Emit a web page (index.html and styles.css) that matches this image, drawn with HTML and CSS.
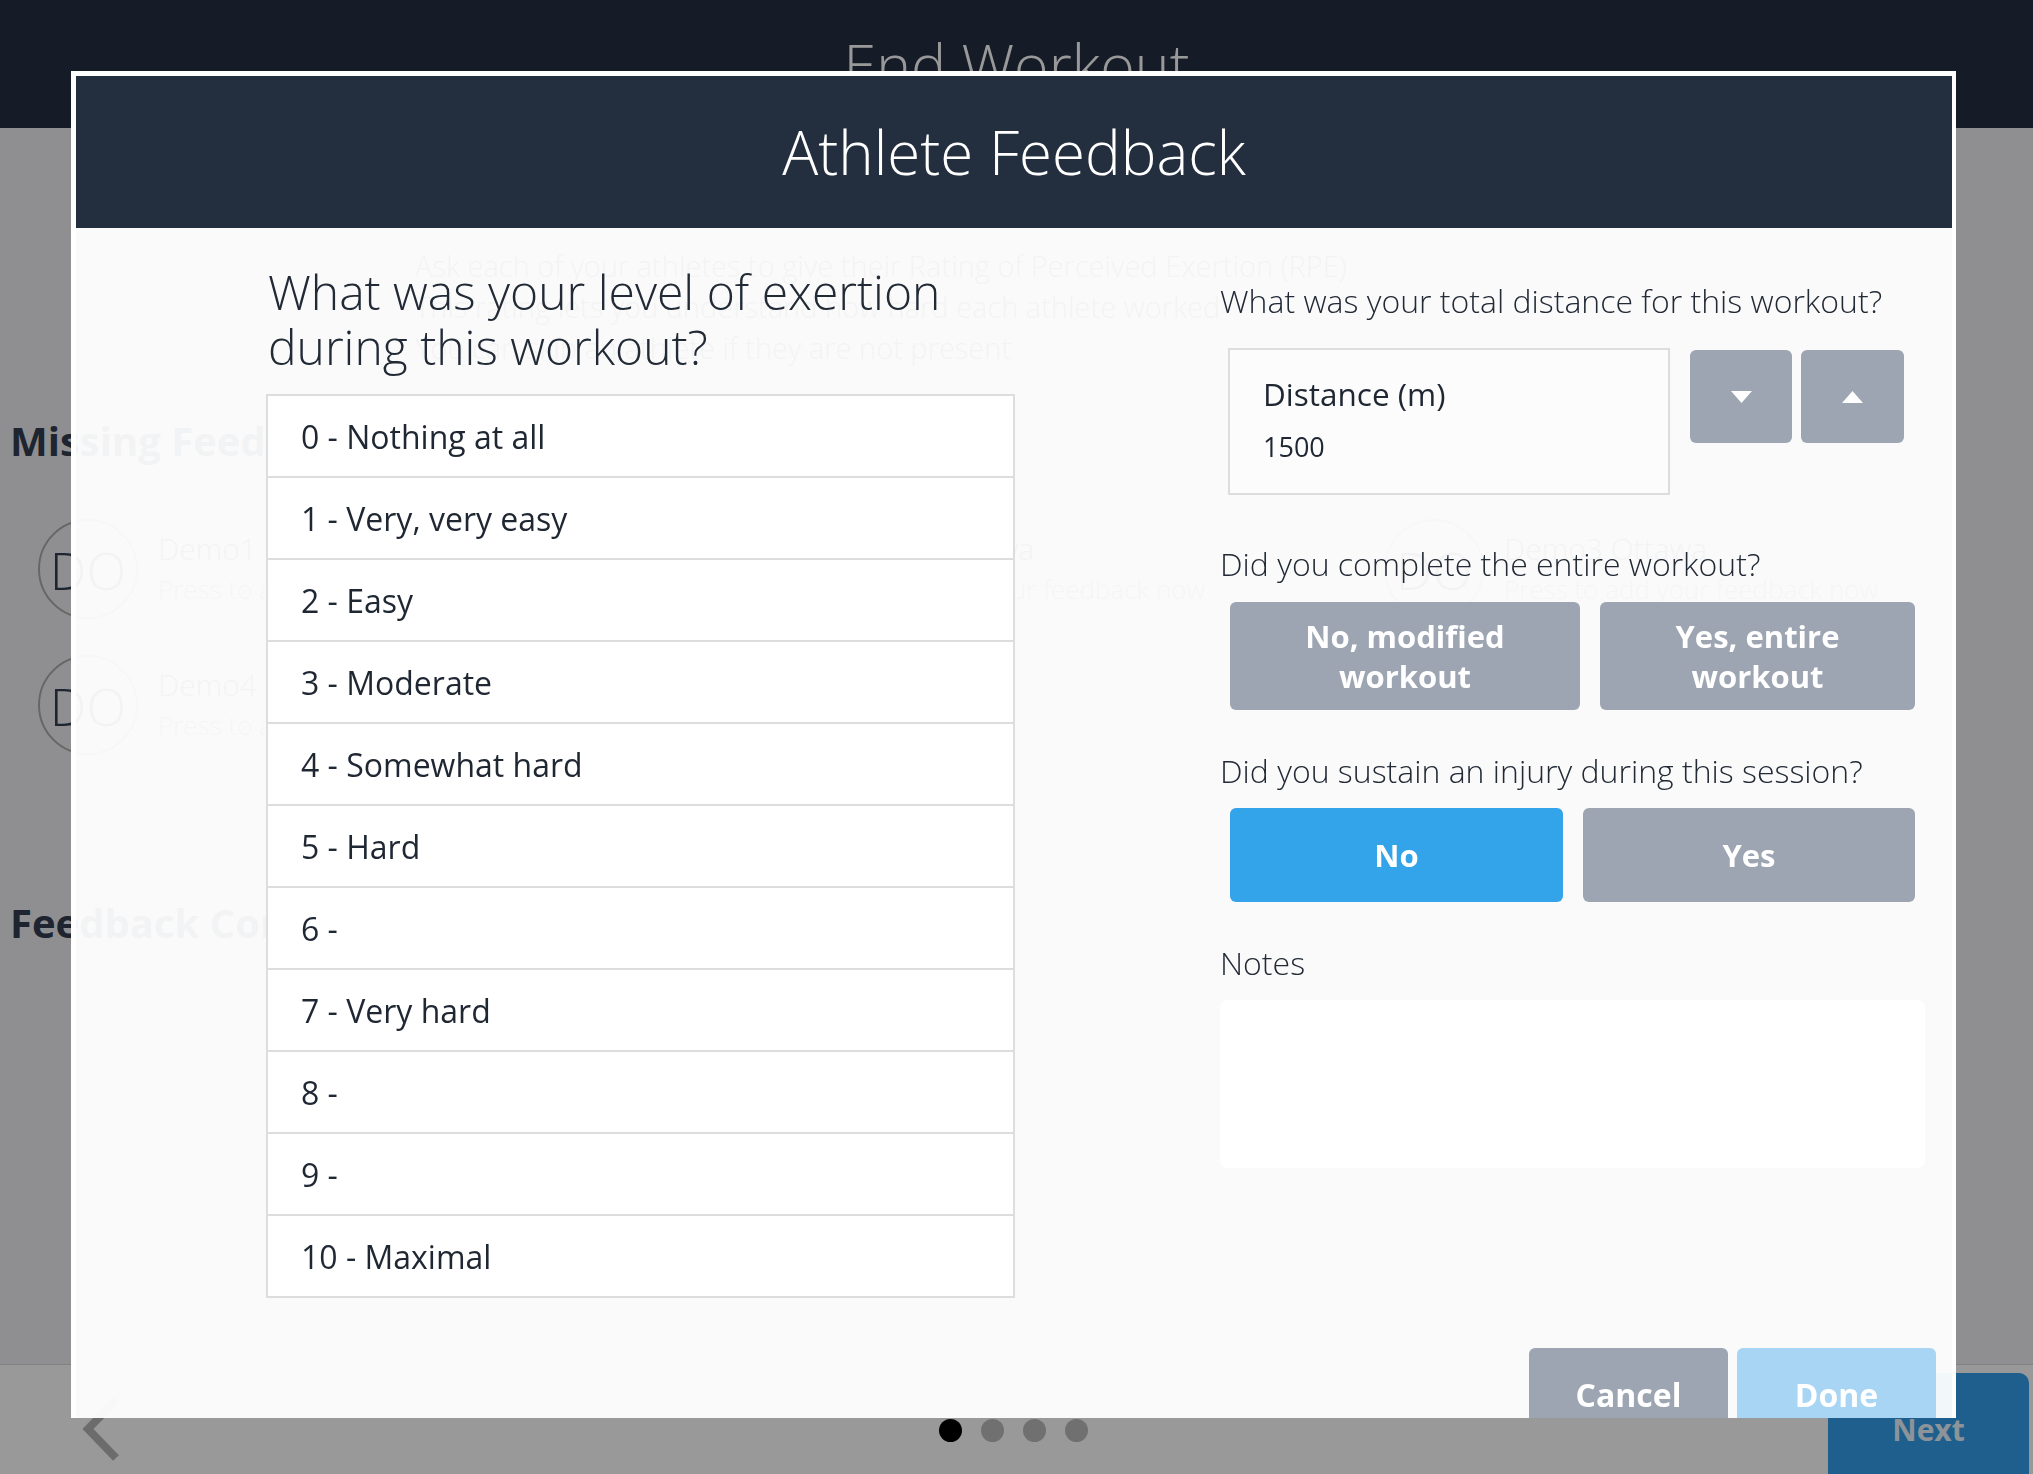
FILE: index.html
```html
<!DOCTYPE html>
<html lang="en">
<head>
<meta charset="utf-8">
<title>Athlete Feedback</title>
<link rel="stylesheet" href="styles.css">
</head>
<body>
<div class="page">
  <header class="topbar"><h1>End Workout</h1></header>
  <div class="intro">
    <p>Ask each of your athletes to give their Rating of Perceived Exertion (RPE)</p>
    <p>This rating lets you understand how hard each athlete worked</p>
    <p>You can skip an athlete if they are not present</p>
  </div>
  <h2 class="section-title missing">Missing Feedback</h2>
  <div class="athletes">
    <div class="athlete"><div class="avatar">DO</div><div class="info"><div class="name">Demo1 Ottawa</div><div class="hint">Press to add your feedback now</div></div></div>
    <div class="athlete"><div class="avatar">DO</div><div class="info"><div class="name">Demo2 Ottawa</div><div class="hint">Press to add your feedback now</div></div></div>
    <div class="athlete"><div class="avatar">DO</div><div class="info"><div class="name">Demo3 Ottawa</div><div class="hint">Press to add your feedback now</div></div></div>
    <div class="athlete"><div class="avatar">DO</div><div class="info"><div class="name">Demo4 Ottawa</div><div class="hint">Press to add your feedback now</div></div></div>
  </div>
  <h2 class="section-title completed">Feedback Completed</h2>
  <footer class="bottombar">
    <svg class="back" width="44" height="70" viewBox="0 0 44 70"><path d="M36 5 L8 34 L36 63" fill="none" stroke="#b5b5b5" stroke-width="8" stroke-linejoin="miter"/></svg>
    <div class="dots"><span class="dot active"></span><span class="dot"></span><span class="dot"></span><span class="dot"></span></div>
    <button class="next">Next</button>
  </footer>
</div>
<div class="backdrop"></div>
<div class="modal">
  <div class="modal-header"><h2>Athlete Feedback</h2></div>
  <div class="modal-body">
    <section class="rpe">
      <h3 class="rpe-question">What was your level of exertion<br>during this workout?</h3>
      <ul class="rpe-list">
        <li>0 - Nothing at all</li>
        <li>1 - Very, very easy</li>
        <li>2 - Easy</li>
        <li>3 - Moderate</li>
        <li>4 - Somewhat hard</li>
        <li>5 - Hard</li>
        <li>6 -</li>
        <li>7 - Very hard</li>
        <li>8 -</li>
        <li>9 -</li>
        <li>10 - Maximal</li>
      </ul>
    </section>
    <section class="details">
      <div class="q">What was your total distance for this workout?</div>
      <div class="distance-row">
        <div class="distance-field">
          <div class="field-label">Distance (m)</div>
          <div class="field-value">1500</div>
        </div>
        <button class="step step-down"><svg width="21" height="12" viewBox="0 0 21 12"><polygon points="0,0 21,0 10.5,12" fill="#fff"/></svg></button>
        <button class="step step-up"><svg width="21" height="12" viewBox="0 0 21 12"><polygon points="0,12 21,12 10.5,0" fill="#fff"/></svg></button>
      </div>
      <div class="q q-complete">Did you complete the entire workout?</div>
      <div class="choice-row complete">
        <button class="choice gray wide">No, modified<br>workout</button>
        <button class="choice gray narrow">Yes, entire<br>workout</button>
      </div>
      <div class="q q-injury">Did you sustain an injury during this session?</div>
      <div class="choice-row injury">
        <button class="choice blue half">No</button>
        <button class="choice gray half">Yes</button>
      </div>
      <div class="q q-notes">Notes</div>
      <div class="notes"></div>
    </section>
  </div>
  <div class="modal-footer">
    <button class="foot cancel">Cancel</button>
    <button class="foot done">Done</button>
  </div>
</div>
</body>
</html>
```
FILE: styles.css
```css
* { box-sizing: border-box; }
html, body { margin: 0; padding: 0; }
body {
  width: 2033px;
  height: 1474px;
  overflow: hidden;
  font-family: "Open Sans", "Noto Sans", sans-serif;
  background: #eeeff2;
  color: #323e50;
}
button { font-family: inherit; border: none; padding: 0; margin: 0; color: #fff; cursor: pointer; }

/* underlying page */
.page { height: 1474px; display: flex; flex-direction: column; }
.topbar {
  flex: none;
  height: 128px;
  background: #252f41;
  display: flex;
  align-items: center;
  justify-content: center;
}
.topbar h1 { margin: 0; font-size: 59px; font-weight: 300; color: #fff; line-height: 1; }
.intro {
  margin: 117px 0 0 415px;
  font-size: 29px;
  font-weight: 300;
  line-height: 41px;
  color: #333d4d;
}
.intro p { margin: 0; white-space: nowrap; }
.section-title {
  margin: 0;
  padding-left: 10px;
  font-size: 40px;
  font-weight: 700;
  line-height: 50px;
  color: #323e50;
  white-space: nowrap;
}
.missing { margin-top: 48px; }
.athletes {
  display: grid;
  grid-template-columns: repeat(3, 673px);
  row-gap: 36px;
  margin: 53px 0 0 38px;
}
.athlete { display: flex; align-items: center; gap: 20px; height: 100px; }
.avatar {
  flex: none;
  width: 100px;
  height: 100px;
  border-radius: 50%;
  border: 2px solid #ababab;
  display: flex;
  align-items: center;
  justify-content: center;
  font-size: 52px;
  font-weight: 300;
  color: #323e50;
}
.name { font-size: 30px; font-weight: 300; line-height: 40px; white-space: nowrap; }
.hint { font-size: 26px; font-weight: 300; line-height: 40px; color: #6b7380; white-space: nowrap; }
.completed { margin-top: 143px; }

.bottombar {
  margin-top: auto;
  flex: none;
  height: 110px;
  background: #fff;
  border-top: 1px solid #d8d8d8;
  display: grid;
  grid-template-columns: 1fr auto 1fr;
  align-items: start;
}
.back { margin: 30px 0 0 80px; justify-self: start; }
.dots { display: flex; gap: 19px; margin: 54px 6px 0 0; }
.dot { width: 23px; height: 23px; border-radius: 50%; background: #bbbbbb; }
.dot.active { background: #000; }
.next {
  justify-self: end;
  margin: 8px 4px 0 0;
  width: 201px;
  height: 101px;
  background: #329eeb;
  border-radius: 10px 10px 0 0;
  font-size: 30px;
  font-weight: 700;
  line-height: 40px;
  padding-top: 37px;
  display: flex;
  justify-content: center;
  align-items: flex-start;
  color: #e9f6ff;
}

/* overlay */
.backdrop { position: fixed; inset: 0; background: rgba(0, 0, 0, 0.4); }

.modal {
  position: fixed;
  left: 71px;
  top: 71px;
  width: 1885px;
  height: 1347px;
  border-style: solid;
  border-color: #fff;
  border-width: 5px 4px 0 5px;
  background: rgba(255, 255, 255, 0.945);
  overflow: hidden;
  color: #222a36;
}
.modal-header {
  height: 152px;
  background: #232f3f;
  display: flex;
  align-items: center;
  justify-content: center;
}
.modal-header h2 { margin: 0; font-size: 60px; font-weight: 300; color: #fff; line-height: 1; }

.modal-body { display: flex; padding-left: 190px; }
.rpe { width: 749px; flex: none; padding-top: 36px; }
.rpe-question {
  margin: 0 0 0 2px;
  font-size: 48px;
  font-weight: 300;
  line-height: 55px;
  color: #222a36;
  white-space: nowrap;
}
.rpe-list {
  list-style: none;
  margin: 20px 0 0 0;
  padding: 0;
  background: #fff;
  border: 2px solid #dddddd;
}
.rpe-list li {
  height: 80px;
  padding-left: 33px;
  display: flex;
  align-items: center;
  font-size: 32px;
  color: #1f2733;
}
.rpe-list li + li { border-top: 2px solid #dddddd; height: 82px; }

.details { margin-left: 205px; width: 705px; flex: none; padding-top: 53px; }
.q { font-size: 32px; font-weight: 300; line-height: 40px; color: #222a36; white-space: nowrap; }
.distance-row { display: flex; align-items: flex-start; margin: 27px 0 0 8px; }
.distance-field {
  width: 442px;
  height: 147px;
  border: 2px solid #dddddd;
  background: #fcfcfc;
  padding: 24px 0 0 33px;
}
.field-label { font-size: 31.5px; line-height: 40px; color: #1f2733; }
.field-value { font-size: 27px; line-height: 40px; margin-top: 13px; color: #1f2733; }
.step {
  margin-top: 2px;
  height: 93px;
  background: #9ca5b1;
  border-radius: 6px;
  display: flex;
  align-items: center;
  justify-content: center;
}
.step-down { width: 102px; margin-left: 20px; }
.step-up { width: 103px; margin-left: 9px; }

.q-complete { margin-top: 49px; }
.choice-row { display: flex; gap: 20px; margin-left: 10px; }
.complete { margin-top: 18px; }
.complete .choice { height: 108px; }
.wide { width: 350px; }
.narrow { width: 315px; }
.choice {
  border-radius: 6px;
  font-size: 31px;
  font-weight: 700;
  line-height: 40px;
  text-align: center;
}
.gray { background: #9ca5b1; }
.blue { background: #33a3ea; }
.q-injury { margin-top: 41px; }
.injury { margin-top: 17px; }
.injury .choice { height: 94px; }
.half { width: 333px; }
.injury .half + .half { width: 332px; }
.q-notes { margin-top: 41px; }
.notes { margin-top: 17px; width: 705px; height: 168px; background: #fff; border-radius: 8px; }

.modal-footer { display: flex; justify-content: flex-end; gap: 9px; margin-top: 50px; padding-right: 16px; }
.foot {
  width: 199px;
  height: 94px;
  border-radius: 6px 6px 0 0;
  font-size: 32px;
  font-weight: 700;
  line-height: 40px;
}
.cancel { background: #9ca5b1; }
.done { background: #a9d5f4; }
```
